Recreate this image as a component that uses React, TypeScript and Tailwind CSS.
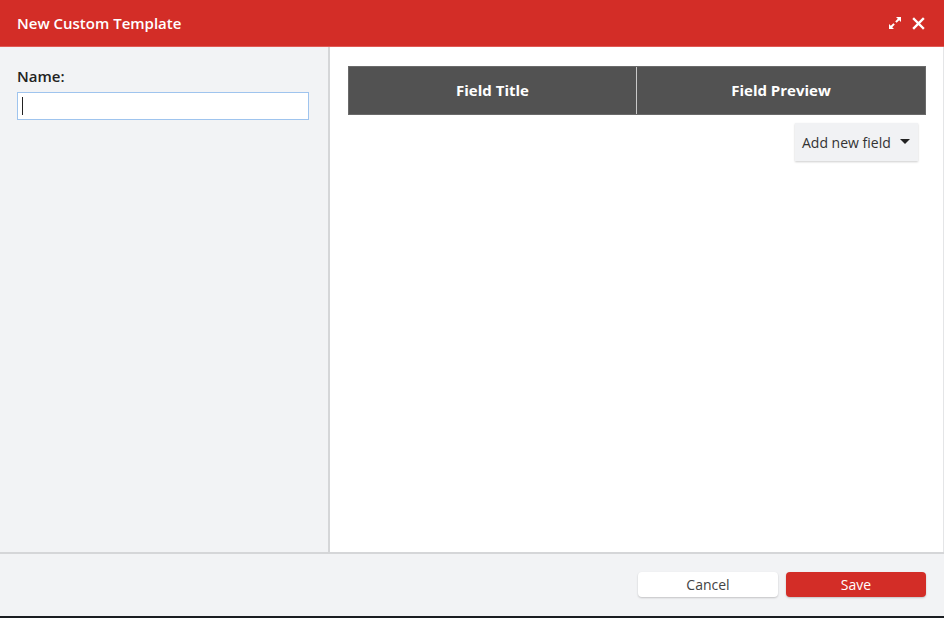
import React from "react";

export default function App() {
  return (
    <div
      className="w-[944px] h-[618px] flex flex-col bg-[#f2f3f5] border-b-2 border-[#1a1d21] overflow-hidden"
      style={{ fontFamily: '"Open Sans", "Noto Sans", sans-serif' }}
    >
      <div className="h-[47px] shrink-0 bg-[#d32d27] border-b border-[#e05a55] flex items-center justify-between pl-[17px] pr-[19px]">
        <div className="text-white text-[15px] font-semibold">New Custom Template</div>
        <div className="flex items-center gap-[11px]">
          <svg width="12" height="12" viewBox="0 0 12 12" fill="white">
            <path d="M7 0h5v5l-1.8-1.8L7.6 5.8 6.2 4.4l2.6-2.6z" />
            <path d="M5 12H0V7l1.8 1.8 2.6-2.6 1.4 1.4-2.6 2.6z" />
          </svg>
          <svg width="13" height="13" viewBox="0 0 13 13" stroke="white" strokeWidth="2.4" strokeLinecap="square">
            <path d="M2 2l9 9M11 2l-9 9" />
          </svg>
        </div>
      </div>
      <div className="flex flex-1 min-h-0">
        <div className="w-[330px] shrink-0 bg-[#f2f3f5] border-r-2 border-[#d5d6d8] pl-[17px] pr-[19px] pt-[19px]">
          <div className="text-[15px] font-semibold text-[#222] leading-[21px]">Name:</div>
          <div className="mt-[5px] h-[28px] bg-white border border-[#9fc4ee] flex items-center pl-[4px]">
            <div className="w-px h-[18px] bg-[#222]" />
          </div>
        </div>
        <div className="flex-1 bg-white border-r border-[#e4e5e7] pl-[18px] pr-[17px] pt-[19px]">
          <div className="flex h-[49px] bg-[#525252] border border-[#6a6a6a]">
            <div className="w-[288px] flex items-center justify-center border-r border-[#c9c9c9] text-white font-bold text-[15px]">
              Field Title
            </div>
            <div className="flex-1 flex items-center justify-center text-white font-bold text-[15px]">
              Field Preview
            </div>
          </div>
          <div className="flex justify-end pr-[8px] mt-[8px]">
            <div className="h-[38px] w-[123px] bg-[#f1f2f4] shadow-[0_1px_2px_rgba(0,0,0,0.2)] flex items-center pl-[7px] text-[14px] text-[#333]">
              Add new field
              <svg className="ml-[9px]" width="10" height="6" viewBox="0 0 10 6" fill="#222">
                <path d="M0 0h10L5 5z" />
              </svg>
            </div>
          </div>
        </div>
      </div>
      <div className="h-[64px] shrink-0 border-t-2 border-[#d5d6d8] bg-[#f2f3f5] flex items-center justify-end gap-[8px] pr-[18px] pb-[1px]">
        <button className="w-[140px] h-[25px] bg-white rounded-[4px] shadow-[0_1px_2px_rgba(0,0,0,0.2)] text-[14px] text-[#444]">
          Cancel
        </button>
        <button className="w-[140px] h-[25px] bg-[#d32d27] rounded-[4px] shadow-[0_1px_2px_rgba(0,0,0,0.2)] text-[14px] text-white">
          Save
        </button>
      </div>
    </div>
  );
}
